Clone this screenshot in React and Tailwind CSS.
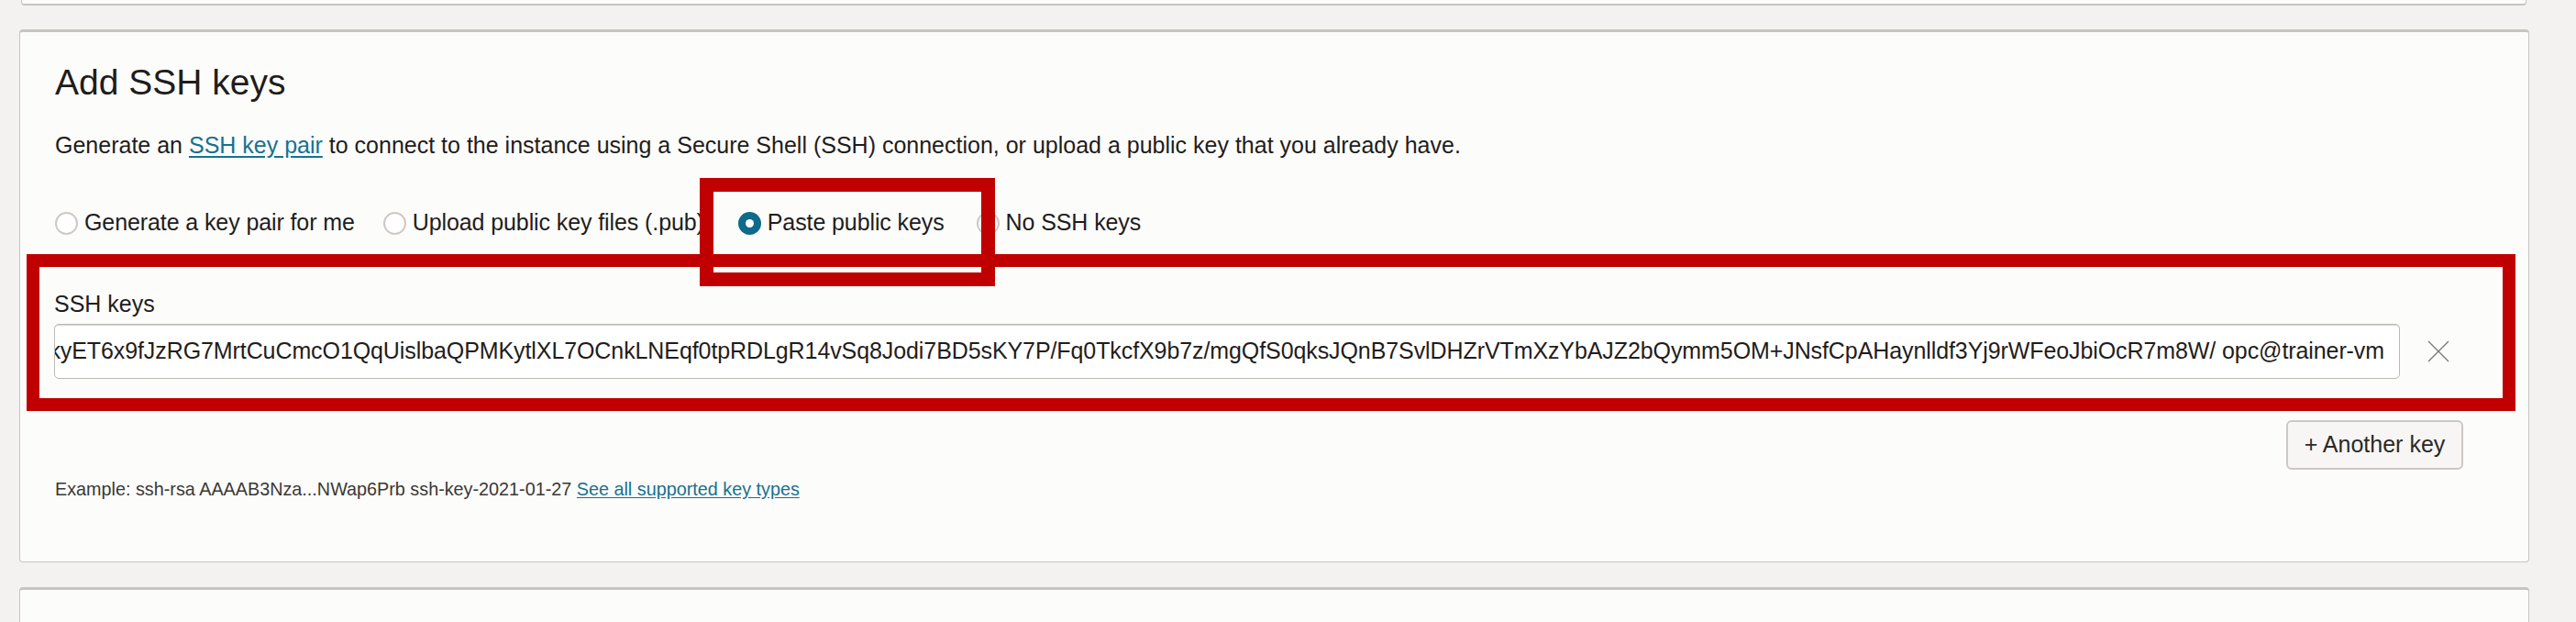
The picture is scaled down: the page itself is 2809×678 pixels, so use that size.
import React from "react";

const keyText =
  "ssh-rsa AAAAB3NzaC1yc2EAAAADAQABAAABAQDk" +
  "yET6x9fJzRG7MrtCuCmcO1QqUislbaQPMKytlXL7OCnkLNEqf0tpRDLgR14vSq8Jodi7BD5sKY7P/Fq0TkcfX9b7z/mgQfS0qksJQnB7SvlDHZrVTmXzYbAJZ2bQymm5OM+JNsfCpAHaynlldf3Yj9rWFeoJbiOcR7m8W/ opc@trainer-vm";

function Radio({ label, checked, className = "" }) {
  return (
    <label className={`flex items-center gap-[7px] ${className}`}>
      {checked ? (
        <span className="w-[25px] h-[25px] rounded-full bg-[#0f6a8c] flex items-center justify-center">
          <span className="w-[9px] h-[9px] rounded-full bg-white" />
        </span>
      ) : (
        <span className="w-[25px] h-[25px] rounded-full border-2 border-[#ccc8c4] bg-white" />
      )}
      <span className="whitespace-nowrap">{label}</span>
    </label>
  );
}

export default function App() {
  return (
    <div className="w-[2809px] h-[678px] overflow-hidden bg-[#f3f2f1] font-['Liberation_Sans',Arial,sans-serif] text-[#1f1d1b]">
      {/* end of previous section */}
      <div className="ml-[23px] w-[2732px] h-[6px] border-x border-b-2 border-[#c8c4c0] rounded-b-[4px] bg-[#fcfcfb]" />

      <div className="relative mt-[26px] ml-[21px] w-[2737px] h-[581px] border border-t-[3px] border-[#c8c4c0] rounded-[4px] bg-[#fcfcfb] pl-[38px] pt-[35px]">
        <h2 className="text-[39px] leading-[40px] font-normal">Add SSH keys</h2>

        <p className="mt-[34px] text-[25px] leading-[28px]">
          Generate an{" "}
          <a className="text-[#17718f] underline underline-offset-[3px]">SSH key pair</a> to
          connect to the instance using a Secure Shell (SSH) connection, or upload a public key
          that you already have.
        </p>

        <div className="mt-[57px] flex items-center h-[28px] text-[25px] tracking-[-0.1px]">
          <Radio label="Generate a key pair for me" />
          <Radio label="Upload public key files (.pub)" className="ml-[31px]" />
          <Radio label="Paste public keys" checked className="ml-[37px]" />
          <Radio label="No SSH keys" className="ml-[35px]" />
        </div>

        {/* SSH keys field, highlighted */}
        <div className="mt-[20px] -ml-[31px] w-[2714px] border-[14px] border-[#c00000] pl-[16px] pt-[27px] pb-[21px]">
          <div className="text-[25px] leading-[26px]">SSH keys</div>
          <div className="mt-[9px] flex items-center">
            <div className="w-[2558px] h-[60px] border border-[#bdb9b5] rounded-[5px] bg-white flex justify-end items-center overflow-hidden pr-[16px] shadow-[inset_0_1px_0_#d8d5d1]">
              <span className="whitespace-nowrap text-[25px] tracking-[-0.09px]">{keyText}</span>
            </div>
            <svg className="ml-[30px]" width="24" height="24" viewBox="0 0 24 24">
              <path d="M1 1 L23 23 M23 1 L1 23" stroke="#7b7773" strokeWidth="1.3" fill="none" />
            </svg>
          </div>
        </div>

        <div className="mt-[10px] flex justify-end pr-[71px]">
          <button className="h-[54px] w-[193px] border-2 border-[#ccc8c4] rounded-[6px] bg-[#f7f6f5] text-[25px] text-[#2b2926]">
            + Another key
          </button>
        </div>

        <div className="mt-[11px] text-[19.8px] leading-[20px] text-[#3a3835]">
          Example: ssh-rsa AAAAB3Nza...NWap6Prb ssh-key-2021-01-27{" "}
          <a className="text-[#17718f] underline underline-offset-2">See all supported key types</a>
        </div>

        {/* highlight around the selected option */}
        <div className="absolute left-[741px] top-[159px] w-[322px] h-[118px] border-[15px] border-[#c00000]" />
      </div>

      <div className="mt-[27px] ml-[21px] w-[2737px] h-[60px] border border-t-[3px] border-[#c8c4c0] rounded-t-[4px] bg-[#fcfcfb]" />
    </div>
  );
}
